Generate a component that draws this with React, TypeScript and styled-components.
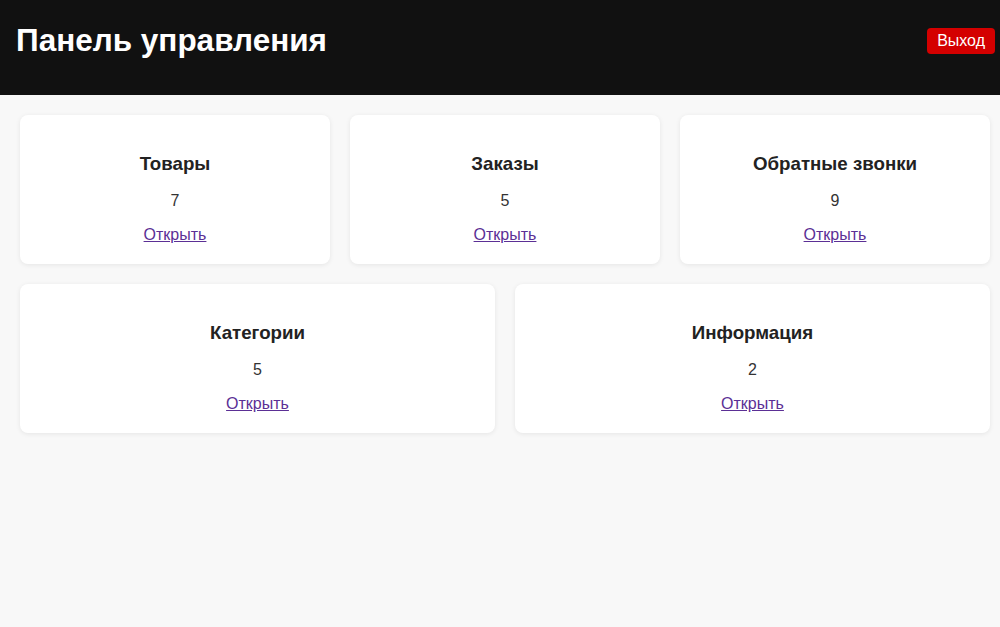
import React from "react";
import styled, { createGlobalStyle } from "styled-components";

const GlobalStyle = createGlobalStyle`
  * {
    box-sizing: border-box;
  }
  body {
    margin: 0;
    background: #f8f8f8;
    font-family: "Liberation Sans", Arial, sans-serif;
  }
`;

const Header = styled.header`
  display: flex;
  justify-content: space-between;
  align-items: center;
  background: #111111;
  padding: 22px 5px 36px 16px;
`;

const Title = styled.h1`
  margin: 0;
  color: #ffffff;
  font-size: 31.5px;
  font-weight: bold;
  line-height: 37px;
`;

const LogoutButton = styled.button`
  background: #d40000;
  color: #ffffff;
  border: none;
  border-radius: 4px;
  padding: 4px 10px;
  font-family: "Liberation Sans", Arial, sans-serif;
  font-size: 16px;
  line-height: 18px;
  cursor: pointer;
`;

const Grid = styled.main`
  display: flex;
  flex-wrap: wrap;
  gap: 20px;
  padding: 20px 10px 20px 20px;
`;

const Card = styled.div`
  flex: 1 1 300px;
  background: #ffffff;
  border-radius: 8px;
  box-shadow: 0 1px 5px rgba(0, 0, 0, 0.08);
  padding: 20px;
  text-align: center;
  font-size: 16px;
  line-height: 18px;
`;

const CardTitle = styled.h3`
  margin: 18px 0;
  font-size: 18.72px;
  line-height: 21px;
  font-weight: bold;
  color: #222222;
`;

const Count = styled.p`
  margin: 16px 0;
  font-size: 16px;
  color: #333333;
`;

const OpenLink = styled.a`
  font-size: 16px;
  color: #5b2f95;
  text-decoration: underline;
`;

interface Section {
  title: string;
  count: number;
}

const sections: Section[] = [
  { title: "Товары", count: 7 },
  { title: "Заказы", count: 5 },
  { title: "Обратные звонки", count: 9 },
  { title: "Категории", count: 5 },
  { title: "Информация", count: 2 },
];

const App = () => {
  return (
    <>
      <GlobalStyle />
      <Header>
        <Title>Панель управления</Title>
        <LogoutButton>Выход</LogoutButton>
      </Header>
      <Grid>
        {sections.map((s) => (
          <Card key={s.title}>
            <CardTitle>{s.title}</CardTitle>
            <Count>{s.count}</Count>
            <OpenLink href="#">Открыть</OpenLink>
          </Card>
        ))}
      </Grid>
    </>
  );
};

export default App;
